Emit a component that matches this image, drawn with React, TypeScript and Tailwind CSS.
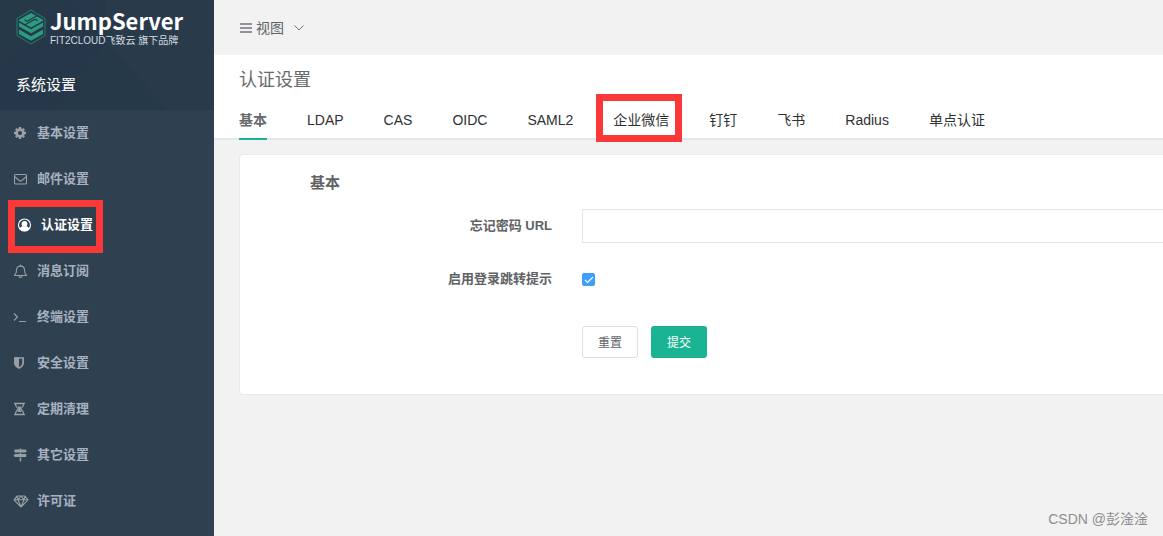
import type { ReactNode } from "react";

const MenuIcon = ({ children }: { children: ReactNode }) => (
  <svg viewBox="0 0 16 16" className="size-4 shrink-0" fill="none" stroke="currentColor" strokeWidth="1.1" aria-hidden="true">
    {children}
  </svg>
);

const menu = [
  {
    label: "基本设置",
    icon: (
      <>
        <circle cx="7" cy="8" r="3.4" strokeWidth="2.6" />
        <path d="M7 2v2M7 12v2M1 8h2M11 8h2M2.8 3.8l1.4 1.4M9.8 10.8l1.4 1.4M11.2 3.8 9.8 5.2M4.2 10.8l-1.4 1.4" strokeWidth="2.4" />
      </>
    ),
  },
  {
    label: "邮件设置",
    icon: (
      <>
        <rect x="1.5" y="3.5" width="12" height="9.5" rx="1" />
        <path d="m1.5 5.5 4.8 4a1.9 1.9 0 0 0 2.4 0l4.8-4" />
      </>
    ),
  },
  {
    label: "认证设置",
    active: true,
    icon: (
      <>
        <circle cx="7.5" cy="8" r="6" />
        <circle cx="7.5" cy="6.8" r="2.9" fill="currentColor" stroke="none" />
        <path d="M2.7 11.9c.4-1.700 1.700-2.500 2.900-2.700h3.800c1.200.2 2.500 1 2.900 2.700A6 6 0 0 1 7.500 14.200a6 6 0 0 1-4.800-2.300z" fill="currentColor" stroke="none" />
      </>
    ),
  },
  {
    label: "消息订阅",
    icon: (
      <>
        <path d="M1.5 12.5c1.7-1.5 2-3.5 2-5.5C3.5 4.5 5 3.1 7.5 3.1s4 1.4 4 3.9c0 2 .3 4 2 5.500z" strokeLinejoin="round" />
        <path d="M7.5 1.5v1.5M6 13c.1.900.7 1.400 1.500 1.400S8.900 13.900 9 13" />
      </>
    ),
  },
  {
    label: "终端设置",
    icon: <path d="m1 4.5 3.5 3.500L1 11.5M6 12.5h7" />,
  },
  {
    label: "安全设置",
    icon: (
      <>
        <path d="M1.9 3h8.200v5.200c0 2-1.700 3.600-4.100 4.900-2.400-1.300-4.100-2.900-4.100-4.900z" strokeWidth="1.7" />
        <path d="M1.5 2.5H6V13c-2.600-1.200-4.500-3-4.500-5z" fill="currentColor" stroke="none" />
      </>
    ),
  },
  {
    label: "定期清理",
    icon: (
      <>
        <path d="M1 2.5h11M1 13.5h11" strokeWidth="1.5" />
        <path d="M2.5 3c0 2.500 1.500 4 3.200 5-1.700 1-3.200 2.500-3.200 5M10.500 3c0 2.500-1.500 4-3.200 5 1.700 1 3.200 2.500 3.200 5" />
        <path d="M4.500 5.500h4L7 8l1.500 3h-4L6 8z" fill="currentColor" stroke="none" />
      </>
    ),
  },
  {
    label: "其它设置",
    icon: (
      <path
        d="M6.7 1.5h1.500v1h4.300l1.500 1.500-1.500 1.500h-11v-3h5.200zM6.700 6h1.500v1h5v3H2L.5 8.500 2 7h4.700zM6.700 10.500h1.500v4H6.700z"
        fill="currentColor"
        stroke="none"
      />
    ),
  },
  {
    label: "许可证",
    icon: <path d="M4 3h8l3 3.800L8 14 1 6.800zM1 6.800h14M8 3 5 6.800 8 14l3-7.200zM4 3l1 3.800M12 3l-1 3.800" strokeLinejoin="round" />,
  },
];

const tabs = ["基本", "LDAP", "CAS", "OIDC", "SAML2", "企业微信", "钉钉", "飞书", "Radius", "单点认证"];

const Logo = () => (
  <div className="flex gap-1 pl-4 pt-[9px]">
    <svg viewBox="0 0 30 36" className="h-9 w-[30px]" aria-hidden="true">
      <path d="M15 1 29 9.500v17L15 35 1 26.500v-17z" fill="none" stroke="#26806f" />
      <path d="m15 4 12 6.800v1L15 18.600 3 11.800v-1z" fill="#2b9c80" />
      <path d="M21.500 6.500 11 12.200l-2.500-1.400M8.500 16 19 10.200l2.500 1.400" fill="none" stroke="#263949" strokeWidth="1.300" />
      <path d="m3 13.500 12 6.800 12-6.800v4l-12 6.800-12-6.800z" fill="#2b9c80" />
      <path d="m3 20.500 12 6.800 12-6.800V25l-12 6.800L3 25z" fill="#2b9c80" />
    </svg>
    <div className="whitespace-nowrap text-white">
      <div className="h-6 font-['Noto_Sans_CJK_SC',sans-serif] text-[22px] font-bold leading-[22px]">JumpServer</div>
      <div className="text-[10px] leading-4 text-[#d5dbe0]">FIT2CLOUD飞致云 旗下品牌</div>
    </div>
  </div>
);

const Sidebar = () => (
  <aside className="w-[214px] shrink-0 bg-[#2f4050]">
    <div className="relative h-[110px] overflow-hidden bg-[#263949]">
      <svg viewBox="0 0 214 110" className="absolute inset-0 size-full" aria-hidden="true">
        <path d="M76 0h138v110h-46L106 42z" fill="#293b4b" />
        <path d="M0 60 60 0h46v42L60 110H0z" fill="#243747" opacity=".6" />
      </svg>
      <div className="relative">
        <Logo />
        <h2 className="pl-4 pt-6 text-[15px] leading-6 text-white">系统设置</h2>
      </div>
    </div>
    <nav>
      {menu.map((item) => (
        <a
          key={item.label}
          href="#"
          className={
            item.active
              ? "relative flex h-[46px] items-center gap-2 border-l-4 border-[#2f4050] pl-[13px] text-[13px] font-bold text-white"
              : "flex h-[46px] items-center gap-2 pl-[13px] text-[13px] font-bold text-[#a7b1c2]"
          }
        >
          <span className={item.active ? "text-white" : "text-[#9a9fa5]"}>
            <MenuIcon>{item.icon}</MenuIcon>
          </span>
          {item.label}
          {item.active && <span className="absolute -top-[2px] left-1 h-[53px] w-[95px] border-[7px] border-[#fb3838]" />}
        </a>
      ))}
    </nav>
  </aside>
);

const Tabs = () => (
  <div role="tablist" className="flex h-10 gap-10 border-b-2 border-[#e4e7ed] pl-[25px] text-sm text-[#303133]">
    {tabs.map((tab, i) => (
      <button
        key={tab}
        type="button"
        role="tab"
        aria-selected={i === 0}
        className={
          i === 0
            ? "-mb-[2px] h-10 shrink-0 border-b-2 border-[#1ab394] pt-[2px] font-bold text-[#676a6c]"
            : "relative h-10 shrink-0 whitespace-nowrap border-b-2 border-transparent pt-[2px]"
        }
      >
        {tab}
        {tab === "企业微信" && (
          <span className="absolute -top-[6px] -left-[17px] h-12 w-[86px] border-[7px] border-[#fb3838]" />
        )}
      </button>
    ))}
  </div>
);

const AuthForm = () => (
  <form className="ml-[25px] mt-[14px] rounded-l border border-r-0 border-[#e7eaf0] bg-white pb-9 text-[13px] text-[#606266]">
    <h3 className="pl-[70px] pt-[18px] text-[15px] font-bold leading-5">基本</h3>
    <div className="mt-4 flex items-center">
      <label htmlFor="forgot-url" className="w-[312px] shrink-0 text-right font-bold">
        忘记密码 URL
      </label>
      <input
        id="forgot-url"
        type="text"
        className="ml-[30px] h-[34px] min-w-0 flex-1 border border-r-0 border-[#e5e6e7] px-3"
      />
    </div>
    <div className="mt-[19px] flex h-[34px] items-center">
      <label htmlFor="redirect-tip" className="w-[312px] shrink-0 text-right font-bold">
        启用登录跳转提示
      </label>
      <span className="relative ml-[30px] size-[13px]">
        <input
          id="redirect-tip"
          type="checkbox"
          defaultChecked
          className="peer block size-[13px] appearance-none rounded-xs border border-[#dcdfe6] checked:border-[#409eff] checked:bg-[#409eff]"
        />
        <svg
          viewBox="0 0 13 13"
          className="pointer-events-none absolute inset-0 hidden peer-checked:block"
          fill="none"
          stroke="#fff"
          strokeWidth="1.2"
          aria-hidden="true"
        >
          <path d="m3 6.800 2.500 2.600L11 4" />
        </svg>
      </span>
    </div>
    <div className="mt-[30px] ml-[342px] flex gap-[13px] text-xs">
      <button type="reset" className="h-8 w-14 rounded-[3px] border border-[#dcdfe6] bg-white pt-px">
        重置
      </button>
      <button type="submit" className="h-8 w-14 rounded-[3px] bg-[#1ab394] pt-px text-white">
        提交
      </button>
    </div>
  </form>
);

const App = () => {
  return (
    <div className="relative flex min-h-screen bg-[#f2f2f2] font-['Liberation_Sans','Noto_Sans_CJK_SC',sans-serif]">
      <Sidebar />
      <main className="min-w-0 flex-1">
        <header className="flex h-[55px] items-center pl-[25px] text-sm text-[#606266]">
          <button type="button" className="flex items-center">
            <svg viewBox="0 0 14 12" className="mr-[3px] h-3 w-[14px]" stroke="#909399" strokeWidth="2" aria-hidden="true">
              <path d="M1 2h12M1 6h12M1 10h12" />
            </svg>
            视图
            <svg viewBox="0 0 10 6" className="ml-[10px] h-[6px] w-[10px]" fill="none" stroke="#73767a" aria-hidden="true">
              <path d="m.5.5 4.500 4.500L9.500.5" />
            </svg>
          </button>
        </header>
        <section className="bg-white">
          <h1 className="h-[45px] pl-[25px] pt-3 text-lg leading-[26px] text-[#676a6c]">认证设置</h1>
          <Tabs />
        </section>
        <AuthForm />
      </main>
      <div className="absolute bottom-2 right-[15px] text-sm leading-[18px] text-[#8e8e8e]">CSDN @彭淦淦</div>
    </div>
  );
};

export default App;
